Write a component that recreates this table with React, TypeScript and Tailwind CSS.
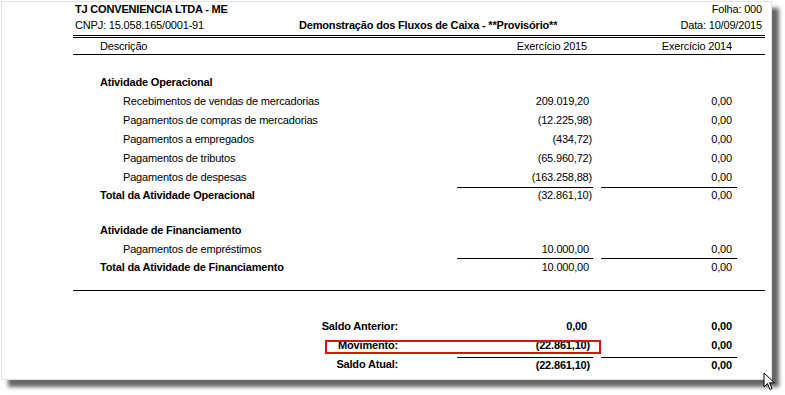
import React from "react";

const F = { fontFamily: '"Liberation Sans", Arial, sans-serif' };

function Row({
  label,
  indent,
  bold,
  v1,
  v2,
  neg1,
  lineTop,
  h = "h-[19px]",
}: {
  label: string;
  indent?: boolean;
  bold?: boolean;
  v1?: string;
  v2?: string;
  neg1?: boolean;
  lineTop?: boolean;
  h?: string;
}) {
  return (
    <div className={`flex ${h} items-center`}>
      <div className={`flex-1 ${indent ? "pl-[50px]" : "pl-[27px]"} ${bold ? "font-bold" : ""}`}>{label}</div>
      <div
        className={`w-[136px] h-full flex items-center justify-end ${neg1 ? "pr-[1px]" : "pr-[4px]"} ${lineTop ? "border-t border-black" : ""}`}
      >
        {v1}
      </div>
      <div className="w-[8px]" />
      <div className={`w-[136px] h-full flex items-center justify-end pr-[5px] ${lineTop ? "border-t border-black" : ""}`}>
        {v2}
      </div>
      <div className="w-[28px]" />
    </div>
  );
}

function SaldoRow({
  label,
  v1,
  v2,
  lineTop,
  neg1,
  h = "h-[19px]",
}: {
  label: string;
  v1: string;
  v2: string;
  lineTop?: boolean;
  neg1?: boolean;
  h?: string;
}) {
  return (
    <div className={`flex ${h} items-stretch font-bold`}>
      <div className="flex-1 flex items-center justify-end pr-[59px]">{label}</div>
      <div
        className={`w-[136px] flex items-center justify-end ${neg1 ? "pr-[3px]" : "pr-[6px]"} ${lineTop ? "border-t border-black" : ""}`}
      >
        {v1}
      </div>
      <div className="w-[8px]" />
      <div className={`w-[136px] flex items-center justify-end pr-[5px] ${lineTop ? "border-t border-black" : ""}`}>
        {v2}
      </div>
      <div className="w-[28px]" />
    </div>
  );
}

export default function App() {
  return (
    <div className="w-[785px] h-[395px] bg-white overflow-hidden relative text-[11px] text-black tracking-[-0.18px]" style={F}>
      <div className="ml-[1px] mt-[1px] w-[771px] h-[379px] bg-white border border-[#e4e4e4] shadow-[7px_7px_4px_rgba(0,0,0,0.6)] relative">
        <div className="pl-[71px] pr-[6px] flex flex-col leading-none">
          <div className="flex h-[15px] items-center justify-between pr-[3px]">
            <div className="pl-[2px] font-bold">TJ CONVENIENCIA LTDA - ME</div>
            <div>Folha: 000</div>
          </div>
          <div className="flex h-[17px] items-center pr-[3px]">
            <div className="pl-[2px] w-[226px]">CNPJ: 15.058.165/0001-91</div>
            <div className="font-bold">Demonstração dos Fluxos de Caixa - **Provisório**</div>
            <div className="ml-auto">Data: 10/09/2015</div>
          </div>
          <div className="mt-[1px] h-[3px] border-y border-black" />
          <div className="flex h-[17px] items-center border-b border-black">
            <div className="flex-1 pl-[27px]">Descrição</div>
            <div className="w-[136px] text-right pr-[6px]">Exercício 2015</div>
            <div className="w-[8px]" />
            <div className="w-[136px] text-right pr-[5px]">Exercício 2014</div>
            <div className="w-[28px]" />
          </div>
          <div className="h-[17px]" />
          <Row label="Atividade Operacional" bold h="h-[20px]" />
          <Row label="Recebimentos de vendas de mercadorias" indent v1="209.019,20" v2="0,00" />
          <Row label="Pagamentos de compras de mercadorias" indent v1="(12.225,98)" v2="0,00" neg1 />
          <Row label="Pagamentos a empregados" indent v1="(434,72)" v2="0,00" neg1 />
          <Row label="Pagamentos de tributos" indent v1="(65.960,72)" v2="0,00" neg1 />
          <Row label="Pagamentos de despesas" indent v1="(163.258,88)" v2="0,00" neg1 />
          <Row label="Total da Atividade Operacional" bold v1="(32.861,10)" v2="0,00" neg1 lineTop h="h-[16px]" />
          <div className="h-[18px]" />
          <Row label="Atividade de Financiamento" bold />
          <Row label="Pagamentos de empréstimos" indent v1="10.000,00" v2="0,00" h="h-[18px]" />
          <Row label="Total da Atividade de Financiamento" bold v1="10.000,00" v2="0,00" lineTop h="h-[18px]" />
          <div className="h-[15px] border-b border-black" />
          <div className="h-[26px]" />
          <SaldoRow label="Saldo Anterior:" v1="0,00" v2="0,00" />
          <div className="pb-[2px]">
            <SaldoRow label="Movimento:" v1="(22.861,10)" v2="0,00" neg1 />
          </div>
          <SaldoRow label="Saldo Atual:" v1="(22.861,10)" v2="0,00" neg1 lineTop h="h-[15px]" />
        </div>
        <div className="absolute left-[323px] top-[338px] w-[276px] h-[14px] border-2 border-[#e01010]" />
      </div>
      <svg className="absolute left-[763px] top-[372px]" width="14" height="20" viewBox="0 0 14 20">
        <path d="M1 1 L1 15 L4.5 11.5 L7 17.5 L9 16.6 L6.6 10.8 L11.5 10.8 Z" fill="#fff" stroke="#000" strokeWidth="1" strokeLinejoin="miter" />
      </svg>
    </div>
  );
}
